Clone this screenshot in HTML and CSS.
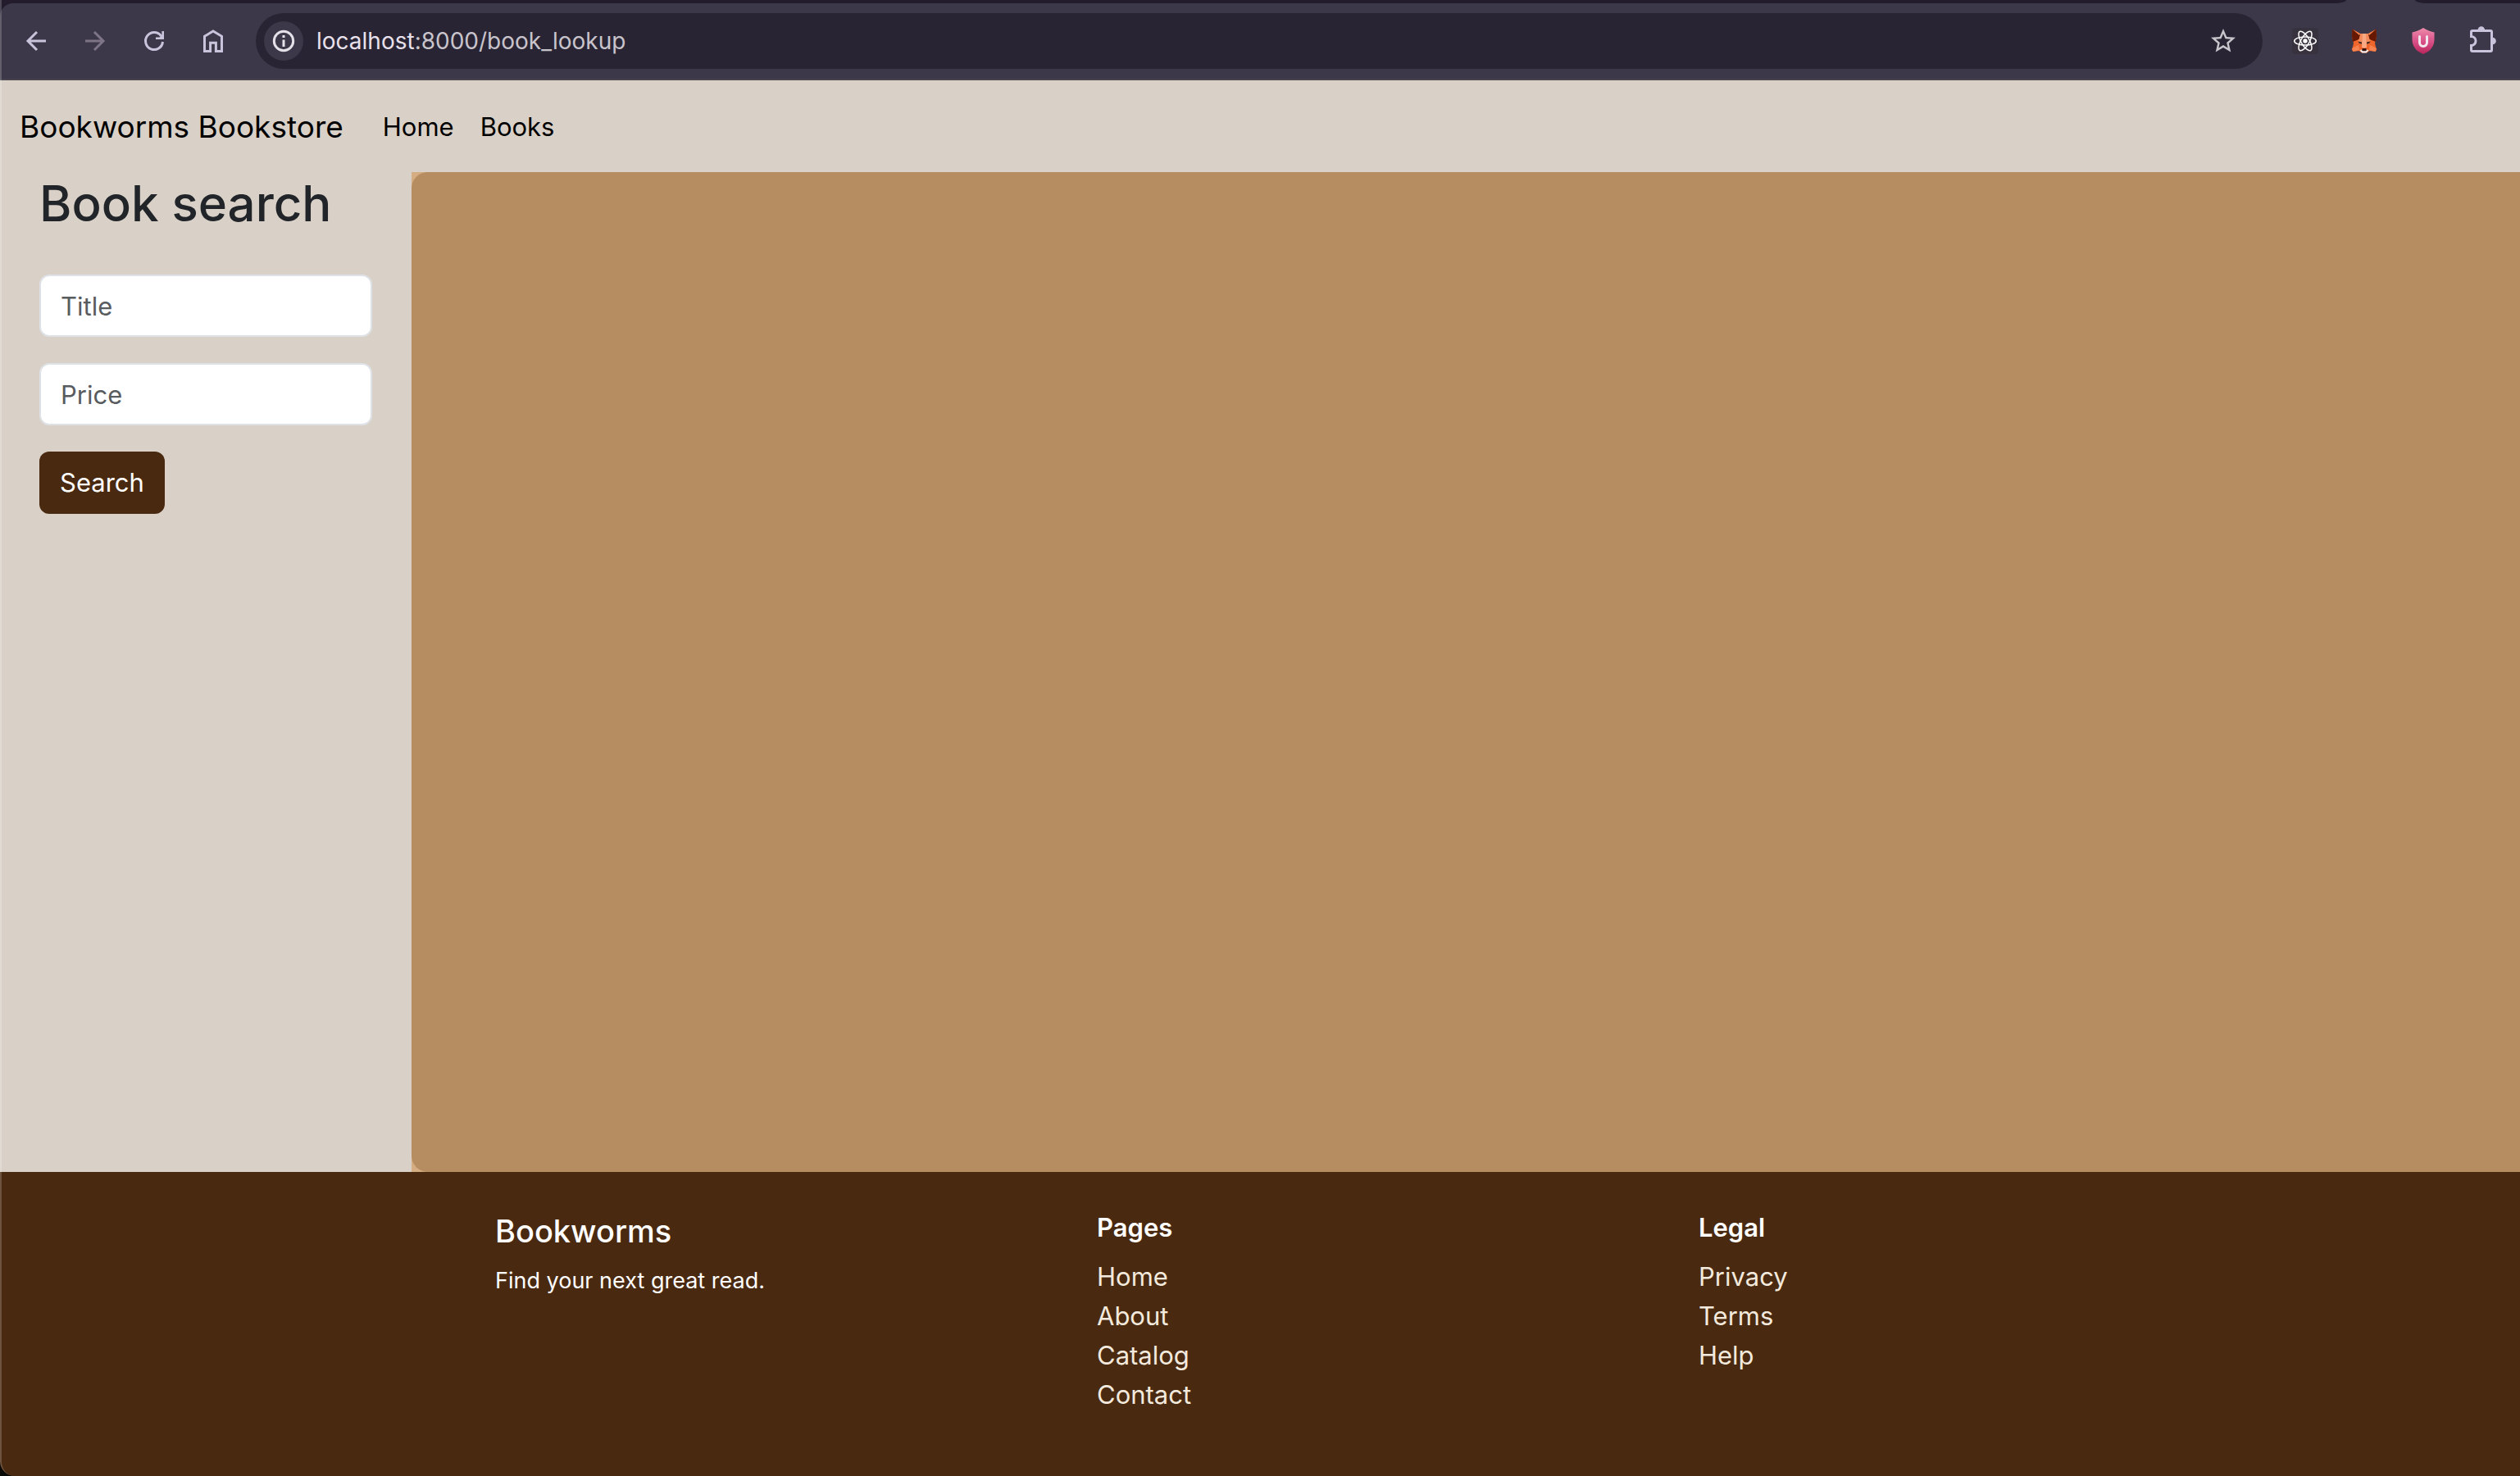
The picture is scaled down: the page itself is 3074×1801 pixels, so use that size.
FILE: index.html
```html
<!DOCTYPE html>
<html lang="en">
<head>
    <meta charset="UTF-8">
    <meta name="viewport" content="width=device-width, initial-scale=1.0">
    <title>Bookworms Bookstore</title>
    <link rel="stylesheet" href="styles.css">
</head>
<body>
    <div class="window">
        <header class="browser">
            <div class="tab-strip">
                <span class="tabs-left"></span>
                <span class="tabs-right"></span>
            </div>
            <div class="toolbar">
                <button class="tool" aria-label="Back">
                    <svg viewBox="0 0 40 40"><path d="M32 20H10M21 9L10 20l11 11"/></svg>
                </button>
                <button class="tool" aria-label="Forward" disabled>
                    <svg viewBox="0 0 40 40"><path d="M8 20h22M19 9l11 11-11 11"/></svg>
                </button>
                <button class="tool" aria-label="Reload">
                    <svg viewBox="0 0 40 40">
                        <path d="M30.5 21A10.5 10.5 0 1 1 28.5 13.8"/>
                        <path class="solid" d="M32 8v10H22v-2.6h4.6l2.8-2.8V8z"/>
                    </svg>
                </button>
                <button class="tool" aria-label="Home page">
                    <svg viewBox="0 0 40 40"><path d="M9.5 14.3L20 8l10.5 6.3v18.2h-7.1V22.2h-6.8v10.3H9.5z"/></svg>
                </button>
                <div class="address-bar">
                    <button class="site-info" aria-label="Site information">
                        <svg viewBox="0 0 40 40">
                            <circle cx="20" cy="20" r="11.7"/>
                            <path d="M20 18.5V27M20 13v3"/>
                        </svg>
                    </button>
                    <div class="url" role="textbox" aria-label="Address" contenteditable="true" spellcheck="false"><span class="host">localhost</span>:8000/book_lookup</div>
                    <button class="star" aria-label="Bookmark">
                        <svg viewBox="0 0 24 24"><path d="M22 9.24l-7.19-.62L12 2 9.19 8.63 2 9.24l5.46 4.73L5.82 21 12 17.27 18.18 21l-1.63-7.03L22 9.24zM12 15.4l-3.76 2.27 1-4.28-3.32-2.88 4.38-.38L12 6.1l1.71 4.04 4.38.38-3.32 2.88 1 4.28L12 15.4z"/></svg>
                    </button>
                </div>
                <div class="extensions">
                    <button class="ext" aria-label="React tools">
                        <svg viewBox="0 0 32 32">
                            <rect width="32" height="32" rx="4" fill="#38323f"/>
                            <g fill="none" stroke="#fff" stroke-width="1.5">
                                <ellipse cx="16" cy="16" rx="13.3" ry="5.1"/>
                                <ellipse cx="16" cy="16" rx="13.3" ry="5.1" transform="rotate(60 16 16)"/>
                                <ellipse cx="16" cy="16" rx="13.3" ry="5.1" transform="rotate(120 16 16)"/>
                            </g>
                            <circle cx="16" cy="16" r="2.7" fill="#fff"/>
                        </svg>
                    </button>
                    <button class="ext" aria-label="Wallet">
                        <svg viewBox="0 0 32 32">
                            <path fill="#f0652b" d="M2 2l9 5h10l9-5 1 9-2 8 2 8-1.5 2-7-1-3.500 2.500h-6L9.500 28l-7 1L1 27l2-8-2-8z"/>
                            <path fill="#f58a5a" d="M11 7h10l3 8-3 5h-2l-1.500 5h-3L13 20h-2l-3-5z"/>
                            <path fill="#f9a883" d="M14 7h4l1 17h-6z"/>
                            <path fill="#661800" d="M1.500 1.500L11 8l-1.500 6L2 17 1 10zM30.500 1.500L21 8l1.500 6 7.500 3 1-7z"/>
                            <path fill="#f58452" d="M2 2l9 5-1 2zM30 2l-9 5 1 2zM1 25l8-4 1 6-7.500 2zM31 25l-8-4-1 6 7.500 2z"/>
                            <path fill="#3d261d" d="M8.500 16.500l4.500 1v2.200l-3-.7zM23.500 16.500l-4.500 1v2.200l3-.7z"/>
                            <path fill="#f3eeee" d="M10.500 27.500l3.500-1.500h4l3.500 1.500-3 3h-5z"/>
                            <path fill="#3d1610" d="M13.800 25h4.400l.8 2.200-1.200 1h-3.600l-1.200-1z"/>
                        </svg>
                    </button>
                    <button class="ext" aria-label="Shield">
                        <svg viewBox="0 0 32 32">
                            <defs>
                                <linearGradient id="shield" x1="0" y1="0" x2="0" y2="1">
                                    <stop offset="0" stop-color="#ee8caa"/>
                                    <stop offset=".5" stop-color="#d9538a"/>
                                    <stop offset="1" stop-color="#b9245b"/>
                                </linearGradient>
                            </defs>
                            <path fill="url(#shield)" d="M16 0c4 2.6 8 4.4 13.500 5.500V14c0 9-5 14.500-13.500 18C7.500 28.500 2.500 23 2.500 14V5.500C8 4.400 12 2.600 16 0z"/>
                            <path fill="none" stroke="#f3e7ee" stroke-width="3" stroke-linecap="round" d="M11.500 10.500V18a4.500 4.500 0 0 0 9 0v-7.500"/>
                        </svg>
                    </button>
                    <button class="ext puzzle" aria-label="Extensions">
                        <svg viewBox="0 0 40 40">
                            <path d="M8 7.500h22a1.500 1.500 0 0 1 1.500 1.500v22a1.500 1.500 0 0 1-1.500 1.500H8A1.500 1.500 0 0 1 6.500 31v-5.500a5.500 5.500 0 0 0 0-11V9A1.500 1.500 0 0 1 8 7.500z"/>
                            <path class="solid" d="M14.500 6.500a4.300 4.300 0 0 1 8.600 0zM32.500 15.700a4.300 4.300 0 0 1 0 8.600z"/>
                        </svg>
                    </button>
                </div>
            </div>
        </header>

        <nav class="navbar">
            <a class="brand" href="#">Bookworms Bookstore</a>
            <a class="nav-link" href="#">Home</a>
            <a class="nav-link" href="#">Books</a>
        </nav>

        <main class="content">
            <aside class="sidebar">
                <h2>Book search</h2>
                <form class="search-form">
                    <input type="text" class="field" name="title" placeholder="Title" aria-label="Title">
                    <input type="text" class="field" name="price" placeholder="Price" aria-label="Price">
                    <button type="submit" class="search-btn">Search</button>
                </form>
            </aside>
            <div class="results-wrap">
                <section class="results"></section>
            </div>
        </main>

        <footer class="footer">
            <div>
                <h5 class="footer-brand">Bookworms</h5>
                <p class="tagline">Find your next great read.</p>
            </div>
            <div>
                <h6>Pages</h6>
                <ul>
                    <li><a href="#">Home</a></li>
                    <li><a href="#">About</a></li>
                    <li><a href="#">Catalog</a></li>
                    <li><a href="#">Contact</a></li>
                </ul>
            </div>
            <div>
                <h6>Legal</h6>
                <ul>
                    <li><a href="#">Privacy</a></li>
                    <li><a href="#">Terms</a></li>
                    <li><a href="#">Help</a></li>
                </ul>
            </div>
        </footer>
    </div>
</body>
</html>
```

FILE: styles.css
```css
* {
    box-sizing: border-box;
}
body {
    margin: 0;
    background-color: #0a0a06;
    font-family: Inter, "Liberation Sans", sans-serif;
    font-size: 31px;
    line-height: 48px;
    color: #212529;
}
h2, h5, h6, p, ul {
    margin: 0;
    padding: 0;
}
a {
    color: inherit;
    text-decoration: none;
}
button {
    font: inherit;
    border: none;
    padding: 0;
    background: none;
    cursor: pointer;
}
svg {
    display: block;
}
.window {
    position: relative;
    display: flex;
    flex-direction: column;
    min-height: 100vh;
    border-bottom-left-radius: 18px;
    overflow: hidden;
}
/* light edge on the left of the window */
.window::after {
    content: "";
    position: absolute;
    inset: 0;
    border-left: 2px solid rgba(255, 255, 255, 0.2);
    border-bottom-left-radius: 18px;
    pointer-events: none;
}

/* browser bar */
.browser {
    background-color: #221c2c;
}
.tab-strip {
    display: flex;
    justify-content: space-between;
    gap: 84px;
    height: 4px;
    background-color: #3d3849;
}
.tabs-left {
    flex: 1;
    background-color: #221c2c;
    border-bottom-right-radius: 14px 4px;
}
.tabs-right {
    width: 128px;
    background-color: #221c2c;
    border-bottom-left-radius: 14px 4px;
}
.toolbar {
    display: flex;
    align-items: center;
    height: 94px;
    padding: 0 26px 0 24px;
    background-color: #3d3849;
    border-bottom: 2px solid #48434d;
    border-top-left-radius: 16px;
}
.tool {
    width: 40px;
    height: 40px;
    margin-right: 32px;
}
.tool svg, .site-info svg {
    width: 40px;
    height: 40px;
    fill: none;
    stroke: #cac3dc;
    stroke-width: 3;
}
.tool .solid, .puzzle .solid {
    fill: #cac3dc;
    stroke: none;
}
.tool:disabled svg {
    stroke: #7d7586;
}
.address-bar {
    flex: 1;
    display: flex;
    align-items: center;
    height: 68px;
    padding: 0 30px 0 10px;
    border-radius: 34px;
    background-color: #282433;
}
.site-info {
    display: flex;
    align-items: center;
    justify-content: center;
    width: 48px;
    height: 48px;
    border-radius: 50%;
    background-color: #3d3849;
}
.site-info svg {
    stroke: #e6e0e9;
}
.url {
    flex: 1;
    margin-left: 16px;
    font-size: 28px;
    color: #c9c4cc;
    outline: none;
}
.host {
    color: #e8e1ec;
}
.star svg {
    width: 36px;
    height: 36px;
    fill: #cac5cc;
}
.extensions {
    display: flex;
    align-items: center;
    gap: 40px;
    margin-left: 36px;
}
.ext svg {
    width: 32px;
    height: 32px;
}
.puzzle {
    margin-left: -4px;
}
.puzzle svg {
    width: 40px;
    height: 40px;
    fill: none;
    stroke: #cac3dc;
    stroke-width: 3;
}

/* page */
.navbar {
    display: flex;
    align-items: center;
    height: 112px;
    padding: 2px 24px 0;
    background-color: #d9d1c7;
    color: #000;
}
.brand {
    margin-right: 48px;
    font-size: 37px;
}
.nav-link {
    margin-right: 32px;
}
.content {
    flex: 1;
    display: flex;
    background-color: #d9d1c7;
}
.sidebar {
    width: 502px;
    padding: 0 48px;
}
.sidebar h2 {
    margin-bottom: 48px;
    font-size: 60px;
    font-weight: 500;
    line-height: 77px;
    white-space: nowrap;
}
.search-form {
    display: flex;
    flex-direction: column;
    align-items: flex-start;
    gap: 32px;
}
.field {
    width: 100%;
    height: 76px;
    padding: 0 24px;
    border: 2px solid #dee2e6;
    border-radius: 12px;
    background-color: #fff;
    font: inherit;
    color: #212529;
}
.field::placeholder {
    color: #595c5f;
    opacity: 1;
}
.search-btn {
    height: 76px;
    padding: 0 25px;
    border-radius: 12px;
    background-color: #492910;
    color: #fff;
}
.results-wrap {
    flex: 1;
    display: flex;
    background-color: #d5ad82;
}
.results {
    flex: 1;
    background-color: #b68d61;
    border-radius: 20px 0 0 20px;
}
.footer {
    display: grid;
    grid-template-columns: repeat(3, 1fr);
    padding: 48px 268px 75px 604px;
    background-color: #492910;
    color: #fff;
}
.footer-brand {
    margin-bottom: 16px;
    font-size: 38px;
    font-weight: 500;
}
.tagline {
    font-size: 27px;
    line-height: 42px;
}
.footer h6 {
    margin-bottom: 16px;
    font-size: 31px;
    font-weight: 600;
    line-height: 40px;
}
.footer ul {
    list-style: none;
}
.footer li {
    color: #f3e9dd;
}
```
